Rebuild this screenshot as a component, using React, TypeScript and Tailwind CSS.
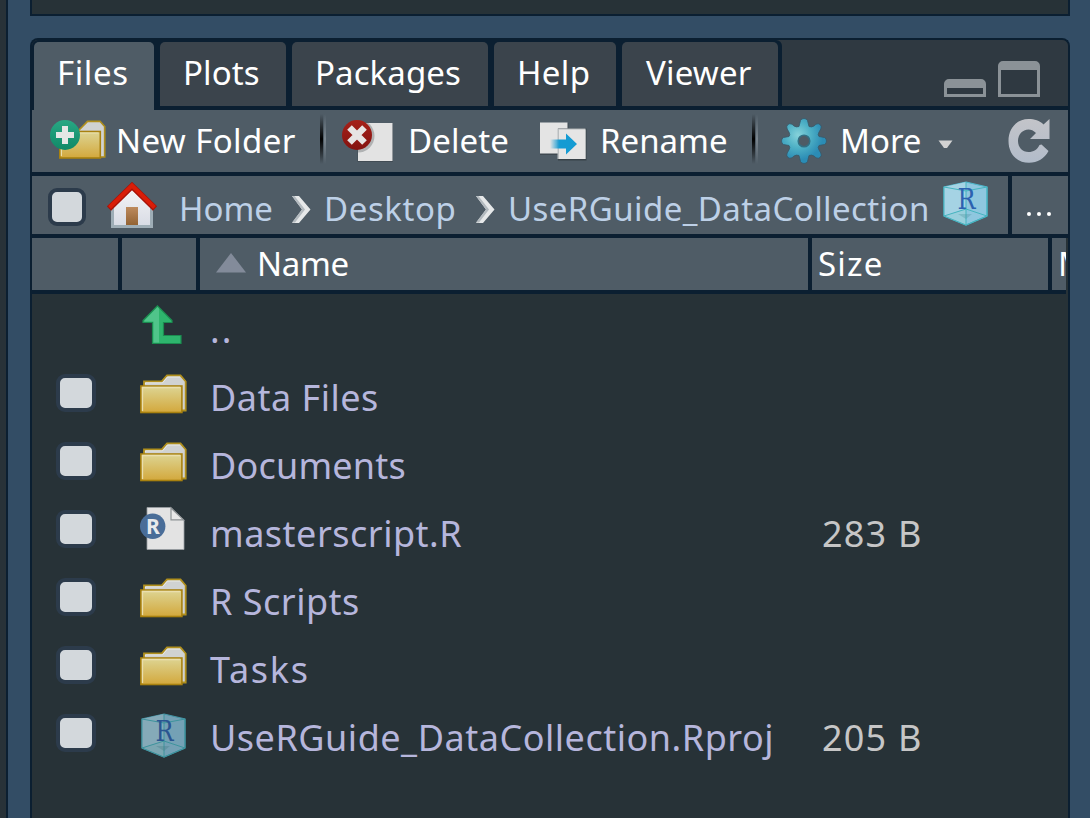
import type { ReactNode } from 'react';

const FONT = "font-['Noto_Sans','Open_Sans',sans-serif]";

function Label({ className, children }: { className: string; children: ReactNode }) {
  return <span className={`block shrink-0 whitespace-nowrap ${className}`}>{children}</span>;
}

function FolderIcon({ className }: { className: string }) {
  return (
    <svg className={className} width="50" height="42" viewBox="0 0 50 42">
      <defs>
        <linearGradient id="folderFront" x1="0" y1="0" x2="0" y2="1">
          <stop offset="0" stopColor="#ddd594" />
          <stop offset="1" stopColor="#d3a83c" />
        </linearGradient>
      </defs>
      <path d="M4 38V7.500H21.500L27 1.500H40.500L45.700 7.500V36.500H41" fill="#d0d2d2" stroke="#b08f1d" strokeWidth="1.800" />
      <path d="M5.500 10V8.800H22.600L27.500 3H40" fill="none" stroke="#e9e9e6" strokeWidth="1" />
      <rect x="0.900" y="12" width="41" height="26.500" fill="url(#folderFront)" stroke="#a8810f" strokeWidth="1.600" />
      <path d="M2.500 37V13.500H40" fill="none" stroke="#eadfae" strokeWidth="1.300" />
    </svg>
  );
}

function NewFolderIcon() {
  return (
    <svg className="shrink-0" width="58" height="46" viewBox="0 0 58 46">
      <defs>
        <linearGradient id="newFront" x1="0" y1="0" x2="0" y2="1">
          <stop offset="0" stopColor="#ddd594" />
          <stop offset="1" stopColor="#d3a83c" />
        </linearGradient>
        <linearGradient id="plusDisc" x1="0" y1="0" x2="0" y2="1">
          <stop offset="0" stopColor="#28a884" />
          <stop offset="1" stopColor="#108967" />
        </linearGradient>
      </defs>
      <path d="M28 13L33 8L37.500 3.300H50L54.700 8.500V39H48" fill="#d0d2d2" stroke="#b08f1d" strokeWidth="1.700" />
      <rect x="9.800" y="13.500" width="40.500" height="26.500" fill="url(#newFront)" stroke="#a8810f" strokeWidth="1.600" />
      <path d="M11.400 38V15H48.500" fill="none" stroke="#eadfae" strokeWidth="1.200" />
      <circle cx="15" cy="17" r="15" fill="url(#plusDisc)" />
      <path d="M12 8H18V14H24V20H18V26H12V20H6V14H12Z" fill="#e4e7e5" />
    </svg>
  );
}

function DeleteIcon() {
  return (
    <svg className="ml-4 shrink-0" width="54" height="46" viewBox="0 0 54 46">
      <defs>
        <linearGradient id="redDisc" x1="0" y1="0" x2="0" y2="1">
          <stop offset="0" stopColor="#a52019" />
          <stop offset="1" stopColor="#84130f" />
        </linearGradient>
        <clipPath id="pageClip">
          <rect x="16" y="5" width="34.500" height="38" />
        </clipPath>
      </defs>
      <rect x="15.500" y="5.500" width="35.500" height="38.500" fill="#424c54" />
      <rect x="16" y="5" width="34.500" height="38" fill="#e3e3e3" />
      <circle cx="16" cy="18" r="16.500" fill="#717578" opacity=".45" clipPath="url(#pageClip)" />
      <circle cx="15" cy="17" r="15" fill="url(#redDisc)" />
      <path d="M7.500 9.500L22.500 24.500M22.500 9.500L7.500 24.500" stroke="#e7e4e3" strokeWidth="6.500" />
    </svg>
  );
}

function RenameIcon() {
  return (
    <svg className="mt-[2px] shrink-0" width="50" height="42" viewBox="0 0 50 42">
      <defs>
        <linearGradient id="arrowFade" x1="0" y1="0" x2="1" y2="0">
          <stop offset="0" stopColor="#159bd3" stopOpacity="0" />
          <stop offset=".35" stopColor="#159bd3" />
          <stop offset="1" stopColor="#139bd3" />
        </linearGradient>
      </defs>
      <rect x="1" y="2" width="28.500" height="32" fill="#3f4951" />
      <rect x="1" y="1.500" width="27.500" height="31" fill="#e4e4e4" />
      <rect x="19" y="7.500" width="28.500" height="32" fill="#384249" />
      <rect x="18.500" y="7.500" width="28" height="30.500" fill="#b9bdbf" />
      <rect x="20" y="8.500" width="26.500" height="29.500" fill="#e5e5e5" />
      <path d="M11 18.500H27V12.500L38 23L27 33.500V27.500H11Z" fill="url(#arrowFade)" />
    </svg>
  );
}

function GearIcon() {
  return (
    <svg className="-mt-px ml-[23px] shrink-0" width="46" height="48" viewBox="-23 -24 46 48">
      <defs>
        <radialGradient id="gearFill" cx="-6" cy="-6" r="25" gradientUnits="userSpaceOnUse">
          <stop offset="0" stopColor="#86d2da" />
          <stop offset=".5" stopColor="#4fb1c6" />
          <stop offset="1" stopColor="#2b8cb5" />
        </radialGradient>
      </defs>
      <path
        d="M-3.500 -20.500Q-2.500 -22.500 0 -22.500Q2.500 -22.500 3.500 -20.500L5 -14.500Q7.500 -13.500 10 -15L12 -16.800Q14.500 -18 16.300 -16.300Q18 -14.500 16.800 -12L14.800 -8.500Q13.500 -6 15 -4.500L20.500 -3.500Q22.500 -2.500 22.500 0Q22.500 2.500 20.500 3.500L15 4.500Q13.500 6 14.800 8.500L16.800 12Q18 14.500 16.300 16.300Q14.500 18 12 16.800L10 15Q7.500 13.500 5 14.500L3.500 20.500Q2.500 22.500 0 22.500Q-2.500 22.500 -3.500 20.500L-5 14.500Q-7.500 13.500 -10 15L-12 16.800Q-14.500 18 -16.300 16.300Q-18 14.500 -16.800 12L-14.800 8.500Q-13.500 6 -15 4.500L-20.500 3.500Q-22.500 2.500 -22.500 0Q-22.500 -2.500 -20.500 -3.500L-15 -4.500Q-13.500 -6 -14.800 -8.500L-16.800 -12Q-18 -14.500 -16.300 -16.300Q-14.500 -18 -12 -16.800L-10 -15Q-7.500 -13.500 -5 -14.500Z"
        fill="url(#gearFill)"
        stroke="#38596a"
        strokeWidth=".8"
      />
      <circle r="5.800" fill="#4e5b65" stroke="#336f83" strokeWidth="1.500" />
    </svg>
  );
}

function RefreshIcon() {
  return (
    <svg className="-mt-px ml-auto mr-[17px] shrink-0" width="43" height="46" viewBox="0 0 43 46">
      <defs>
        <linearGradient id="refreshFill" x1="0" y1="0" x2="0" y2="1">
          <stop offset="0" stopColor="#c3c4c9" />
          <stop offset="1" stopColor="#b2bcca" />
        </linearGradient>
      </defs>
      <path
        d="M41.500 1V21H22L28 15C25.500 12.500 23 11.500 20.500 11.500C14.500 11.500 10 16.500 10 23C10 29.500 14.500 34 20.500 34C25.500 34 29.500 31.500 31.500 27L33.500 26.500L40.500 33C36.500 40.500 29.500 44.800 21 44.800C8.500 44.800 0.500 35.500 0.500 23C0.500 10.500 8.500 1 20.500 1C26.500 1 31.500 2.500 35.500 6.500Z"
        fill="url(#refreshFill)"
      />
    </svg>
  );
}

function HomeIcon() {
  return (
    <svg className="shrink-0" width="52" height="48" viewBox="0 0 52 48">
      <defs>
        <linearGradient id="houseWall" x1="0" y1="0" x2="0" y2="1">
          <stop offset="0" stopColor="#f5f5f7" />
          <stop offset="1" stopColor="#d9dce5" />
        </linearGradient>
        <linearGradient id="houseDoor" x1="0" y1="0" x2="0" y2="1">
          <stop offset="0" stopColor="#bd8a5d" />
          <stop offset="1" stopColor="#936334" />
        </linearGradient>
      </defs>
      <path d="M4 23L25 3L46 23V46H4Z" fill="#9eadb6" />
      <path d="M7 23L25 5L43 23V43H7Z" fill="url(#houseWall)" />
      <rect x="19" y="25" width="12" height="18" fill="url(#houseDoor)" />
      <path d="M2 26.500L25 4L48 26.500" fill="none" stroke="#a81208" strokeWidth="6" />
      <path d="M2.500 25.500L25 3.600L47.500 25.500" fill="none" stroke="#d91d08" strokeWidth="4" />
    </svg>
  );
}

function Chevron() {
  return (
    <svg className="mt-[19px] shrink-0" width="20" height="30" viewBox="0 0 20 30">
      <path d="M1 1H8L19.500 14.500L8 28H1L11 14.500Z" fill="#e6e8e9" />
      <path d="M1 1H3.500L14 14.500L4 27.500H1L11 14.500Z" fill="#b3babf" />
    </svg>
  );
}

function ProjectIcon({ className }: { className: string }) {
  return (
    <svg className={className} width="46" height="46" viewBox="0 0 46 46">
      <path d="M23 1L44 6V35L23 44L1 35V6Z" fill="#8ec7df" stroke="#4fb7cb" strokeWidth="1.200" />
      <path d="M1 6L23 1V28L1 35Z" fill="#a5d3e4" />
      <path d="M1 35L23 28V44Z" fill="#98cfdc" />
      <path d="M23 1V44M1 6L23 10L44 6M1 35L23 28L44 35M1 6V35L23 44L44 35V6" fill="none" stroke="#45b4bf" strokeWidth="1" />
      <path d="M15 33L29 33L23 38Z" fill="#4f94a0" opacity=".35" />
      <text x="23.500" y="27.500" textAnchor="middle" fontFamily="DejaVu Serif, serif" fontSize="27" textLength="18" lengthAdjust="spacingAndGlyphs" fill="#2c62b0">R</text>
    </svg>
  );
}

function UpIcon() {
  return (
    <svg className="ml-[22px] mt-[11px] shrink-0" width="41" height="40" viewBox="0 0 41 40">
      <path d="M15.500 .800L30 15.500V17.500H21.500V30.500H39V38.500H10.500V17.500H1V15.500Z" fill="#2eb56d" stroke="#1b8c50" strokeWidth="1.200" />
      <path d="M15.500 2L2.500 15.500V16.500H11.500V37.500H17V3.500Z" fill="#50c48a" />
    </svg>
  );
}

function ScriptIcon() {
  return (
    <svg className="ml-[20px] mt-[8px] shrink-0" width="46" height="46" viewBox="0 0 46 46">
      <path d="M7 1.500H31L44 14.500V43.500H7Z" fill="#e3e3e3" stroke="#9ba0a3" strokeWidth=".8" />
      <path d="M31 2V13.800H43.500Z" fill="#e8e8e8" stroke="#8e9395" strokeWidth="1.200" />
      <circle cx="12.700" cy="20.300" r="12.700" fill="#496d98" />
      <text x="13" y="27.500" textAnchor="middle" fontFamily="Noto Sans, sans-serif" fontSize="21" fontWeight="700" fill="#e8eaec">R</text>
    </svg>
  );
}

type Kind = 'folder' | 'script' | 'project';

const files: { name: string; kind: Kind; size?: string; spacing: string }[] = [
  { name: 'Data Files', kind: 'folder', spacing: 'tracking-[0.5px]' },
  { name: 'Documents', kind: 'folder', spacing: 'tracking-[0.2px]' },
  { name: 'masterscript.R', kind: 'script', size: '283 B', spacing: 'tracking-[0.5px]' },
  { name: 'R Scripts', kind: 'folder', spacing: 'tracking-[0.5px]' },
  { name: 'Tasks', kind: 'folder', spacing: 'tracking-[1.75px]' },
  { name: 'UseRGuide_DataCollection.Rproj', kind: 'project', size: '205 B', spacing: 'tracking-[0.52px]' },
];

const tabs = [
  { name: 'Files', box: 'h-[68px] w-[120px] bg-[#4f5c66] pl-[23px]', text: 'tracking-[0.6px]' },
  { name: 'Plots', box: 'h-16 w-[126px] bg-[#3b444c] pl-[23px]', text: 'tracking-[0.1px]' },
  { name: 'Packages', box: 'h-16 w-[196px] bg-[#3b444c] pl-[23px]', text: 'tracking-[0.1px]' },
  { name: 'Help', box: 'h-16 w-[122px] bg-[#3b444c] pl-[23px]', text: 'tracking-[0.4px]' },
  { name: 'Viewer', box: 'h-16 w-[156px] bg-[#3b444c] pl-[24px]', text: 'tracking-[0.2px]' },
];

function Separator() {
  return (
    <div className="-mt-1 flex h-[50px] shrink-0">
      <div className="w-[3px] bg-linear-to-b from-transparent via-black to-transparent" />
      <div className="ml-px w-[2px] bg-linear-to-b from-transparent via-[#7a858e] to-transparent" />
    </div>
  );
}

function FileRow({ name, kind, size, spacing }: { name: string; kind: Kind; size?: string; spacing: string }) {
  return (
    <div className="flex h-[68px] shrink-0 text-[36px] leading-[71px]">
      <div className="w-[88px] shrink-0 pl-6 pt-3">
        <div className="h-[38px] w-10 rounded-[9px] border-4 border-[#2c3b4b] bg-[#d3d8dc]" />
      </div>
      <div className="w-[90px] shrink-0">
        {kind === 'folder' && <FolderIcon className="ml-[20px] mt-3" />}
        {kind === 'script' && <ScriptIcon />}
        {kind === 'project' && <ProjectIcon className="ml-[21px] mt-[11px] opacity-75" />}
      </div>
      <Label className={`w-[612px] text-[#b6b6dc] ${spacing}`}>{name}</Label>
      {size && <Label className="tracking-[1.2px] text-[#c6c6c6]">{size}</Label>}
    </div>
  );
}

export default function App() {
  return (
    <div className={`flex h-[818px] w-[1090px] overflow-hidden bg-[#334d65] ${FONT}`}>
      <div className="w-2 shrink-0 border-r-2 border-[#0b1f31] bg-[#283238]" />
      <div className="ml-[22px] flex w-[1040px] shrink-0 flex-col">
        <div className="h-4 shrink-0 border-x-2 border-b-2 border-[#0b1f31] bg-[#273237]" />
        <div className="mt-[22px] flex h-[780px] shrink-0 flex-col overflow-hidden rounded-t-[8px] border-x-2 border-t-2 border-[#0b1f31] bg-[#273237]">
          <div className="flex h-[70px] shrink-0 border-b-4 border-[#0b1f31] bg-[#2f3941] text-[33px] text-white">
            <div className="flex h-[70px] shrink-0 gap-[6px] rounded-tr-[6px] bg-[#0b1f31] pl-[2px] pr-1 pt-[2px]">
              {tabs.map((tab) => (
                <div key={tab.name} className={`shrink-0 rounded-t-[5px] leading-[61px] ${tab.box}`}>
                  <Label className={tab.text}>{tab.name}</Label>
                </div>
              ))}
            </div>
            <div className="ml-auto mr-7 mt-[20px] flex h-[37px] shrink-0 items-end gap-3">
              <div className="h-[18px] w-[42px] rounded-t-[5px] border-[3px] border-t-[9px] border-[#8b9297]" />
              <div className="h-[36px] w-[42px] rounded-t-[5px] border-[3px] border-t-[9px] border-[#8b9297]" />
            </div>
          </div>

          <div className="flex h-[66px] shrink-0 items-center border-b-4 border-[#0b1f31] bg-[#4f5c66] pl-[18px] text-[33px] leading-[58px] text-white">
            <NewFolderIcon />
            <Label className="-mt-px ml-2 w-[204px] tracking-[0.4px]">New Folder</Label>
            <Separator />
            <DeleteIcon />
            <Label className="-mt-px ml-[12px] w-[131px] tracking-[0.1px]">Delete</Label>
            <RenameIcon />
            <Label className="-mt-px ml-[11px] w-[152px]">Rename</Label>
            <Separator />
            <GearIcon />
            <Label className="-mt-px ml-[13px] w-[98px]">More</Label>
            <svg className="mt-[6px] shrink-0" width="15" height="9" viewBox="0 0 15 9">
              <path d="M.500 .500H14.500L9 8H6Z" fill="#d2d2d2" />
            </svg>
            <RefreshIcon />
          </div>

          <div className="flex h-[62px] shrink-0 border-b-4 border-[#0b1f31] bg-[#4f5c66] text-[33px] leading-[65px] text-[#bdd0e7]">
            <div className="ml-4 mt-3 h-[38px] w-[38px] shrink-0 rounded-[9px] border-4 border-[#2c3b4b] bg-[#d3d8dc]" />
            <div className="ml-[21px] mt-[6px] w-[72px] shrink-0"><HomeIcon /></div>
            <Label className="w-[112px] tracking-[0px]">Home</Label>
            <Chevron />
            <Label className="ml-[13px] w-[151px] tracking-[0.6px]">Desktop</Label>
            <Chevron />
            <Label className="ml-[13px] w-[435px] tracking-[0.42px]">UseRGuide_DataCollection</Label>
            <ProjectIcon className="mt-[5px] shrink-0" />
            <div className="ml-auto flex h-[58px] w-[60px] shrink-0 items-start gap-[6px] border-l-4 border-[#0b1f31] pl-[15px] pt-[36px]">
              <div className="size-1 rounded-full bg-white" />
              <div className="size-1 rounded-full bg-white" />
              <div className="size-1 rounded-full bg-white" />
            </div>
          </div>

          <div className="flex h-[56px] w-[1034px] shrink-0 overflow-hidden border-b-4 border-[#0b1f31] bg-[#4f5c66] text-[33px] leading-[52px] text-white">
            <div className="w-[90px] shrink-0 border-r-4 border-[#0b1f31]" />
            <div className="w-[78px] shrink-0 border-r-4 border-[#0b1f31]" />
            <div className="flex w-[612px] shrink-0 border-r-4 border-[#0b1f31] pl-4">
              <svg className="mt-[15px] shrink-0" width="30" height="20" viewBox="0 0 30 20">
                <path d="M15 0L30 19.500H0Z" fill="#838b9a" />
              </svg>
              <Label className="ml-[11px] tracking-[-0.3px]">Name</Label>
            </div>
            <Label className="w-[240px] border-r-4 border-[#0b1f31] pl-[6px] tracking-[1.2px]">Size</Label>
            <Label className="pl-[6px]">M</Label>
          </div>

          <div className="flex h-[68px] shrink-0 text-[36px] leading-[71px] text-[#b6b6dc]">
            <div className="w-[88px] shrink-0" />
            <div className="w-[90px] shrink-0"><UpIcon /></div>
            <Label className="tracking-[2px]">..</Label>
          </div>
          {files.map((file) => <FileRow key={file.name} {...file} />)}
        </div>
      </div>
    </div>
  );
}
